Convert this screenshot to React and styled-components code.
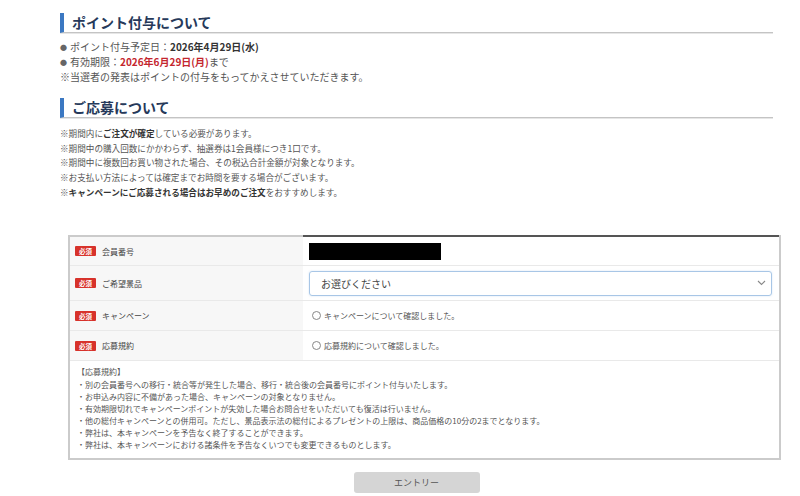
import styled, { createGlobalStyle } from 'styled-components';

const GlobalStyle = createGlobalStyle`
  *, *::before, *::after {
    box-sizing: border-box;
  }
  html, body {
    margin: 0;
    padding: 0;
    background: #fff;
  }
  body {
    font-family: "Noto Sans CJK JP", "Noto Sans", sans-serif;
    color: #555;
  }
`;

const Page = styled.div`
  width: 773px;
  padding: 13px 0 0 60px;
`;

const Heading = styled.h2`
  margin: 0;
  height: 20px;
  padding-left: 8px;
  border-left: 4px solid #3b78c2;
  border-bottom: 1px solid #c4c4c4;
  box-shadow: 0 1px 0 #e6e6e6;
  font-size: 14px;
  line-height: 18px;
  font-weight: 700;
  color: #26395a;
  margin-top: ${({ $top }) => $top || 0}px;
`;

const InfoList = styled.div`
  margin-top: 6px;
  font-size: 10px;
`;

const NoteList = styled.div`
  margin-top: 8px;
  font-size: 8.6px;
`;

const Line = styled.div`
  white-space: nowrap;
  height: ${({ $h }) => $h || 12}px;
  line-height: ${({ $h }) => $h || 12}px;
`;

const Dot = styled.span`
  display: inline-block;
  font-size: 7px;
  line-height: 1;
  vertical-align: middle;
  margin: -2px 3px 0 0;
  color: #666;
`;

const Strong = styled.b`
  color: ${({ $red }) => ($red ? '#c4262e' : '#333')};
  font-weight: 700;
`;

const FormTable = styled.div`
  margin: 36px -8px 0 8px;
  border: 2px solid #cbcbcb;
  border-top: none;
`;

const Row = styled.div`
  display: grid;
  grid-template-columns: 233px 1fr;
  height: ${({ $h }) => $h}px;
  border-top: ${({ $first }) => ($first ? '2px solid #cbcbcb' : '1px solid #e9e9e9')};
`;

const LabelCell = styled.div`
  display: flex;
  align-items: center;
  gap: 6px;
  padding-left: 5px;
  background: #f7f7f7;
  font-size: 8px;
  color: #444;
`;

const ValueCell = styled.div`
  display: flex;
  align-items: center;
  padding: 0 7px 0 6px;
  background: #fff;
  margin-top: ${({ $dark }) => ($dark ? '-2px' : '0')};
  border-top: ${({ $dark }) => ($dark ? '2px solid #555' : 'none')};
`;

const Badge = styled.span`
  display: inline-flex;
  align-items: center;
  justify-content: center;
  width: 21px;
  height: 10px;
  border-radius: 1px;
  background: #d7322b;
  color: #fff;
  font-size: 6.5px;
  font-weight: 700;
`;

const Masked = styled.div`
  width: 132px;
  height: 17px;
  background: #000;
`;

const Select = styled.div`
  flex: 1;
  height: 25px;
  display: flex;
  align-items: center;
  justify-content: space-between;
  padding: 0 5px 0 11px;
  border: 1px solid #a8c6e6;
  border-radius: 3px;
  box-shadow: 0 0 2px rgba(120, 170, 220, 0.35);
  font-size: 10px;
  color: #444;
`;

const Radio = styled.label`
  display: flex;
  align-items: center;
  gap: 3px;
  font-size: 8px;
  color: #555;
`;

const Circle = styled.span`
  width: 9px;
  height: 9px;
  border: 1px solid #888;
  border-radius: 50%;
  margin-left: 3px;
`;

const Terms = styled.div`
  border-top: 1px solid #e9e9e9;
  padding: 5px 7px 7px;
  font-size: 8px;
  color: #555;
`;

const ButtonBar = styled.div`
  display: flex;
  justify-content: center;
  margin-top: 12px;
`;

const EntryButton = styled.button`
  width: 126px;
  height: 21px;
  border: none;
  border-radius: 3px;
  background: #d5d5d5;
  color: #555;
  font-family: inherit;
  font-size: 9px;
  line-height: 21px;
  padding: 0;
`;

const rows = [
  { label: '会員番号', h: 30, content: <Masked /> },
  {
    label: 'ご希望景品',
    h: 35,
    content: (
      <Select>
        お選びください
        <svg width="9" height="6" viewBox="0 0 9 6">
          <path d="M1 1l3.5 3.5L8 1" fill="none" stroke="#888" strokeWidth="1.1" />
        </svg>
      </Select>
    ),
  },
  {
    label: 'キャンペーン',
    h: 30,
    content: (
      <Radio>
        <Circle />
        キャンペーンについて確認しました。
      </Radio>
    ),
  },
  {
    label: '応募規約',
    h: 30,
    content: (
      <Radio>
        <Circle />
        応募規約について確認しました。
      </Radio>
    ),
  },
];

const terms = [
  '【応募規約】',
  '・別の会員番号への移行・統合等が発生した場合、移行・統合後の会員番号にポイント付与いたします。',
  '・お申込み内容に不備があった場合、キャンペーンの対象となりません。',
  '・有効期限切れでキャンペーンポイントが失効した場合お問合せをいただいても復活は行いません。',
  '・他の総付キャンペーンとの併用可。ただし、景品表示法の総付によるプレゼントの上限は、商品価格の10分の2までとなります。',
  '・弊社は、本キャンペーンを予告なく終了することができます。',
  '・弊社は、本キャンペーンにおける諸条件を予告なくいつでも変更できるものとします。',
];

const App = () => {
  return (
    <>
      <GlobalStyle />
      <Page>
        <Heading>ポイント付与について</Heading>
        <InfoList>
          <Line $h={15}>
            <Dot>●</Dot>ポイント付与予定日：<Strong>2026年4月29日(水)</Strong>
          </Line>
          <Line $h={15}>
            <Dot>●</Dot>有効期限：<Strong $red>2026年6月29日(月)</Strong>まで
          </Line>
          <Line $h={15}>※当選者の発表はポイントの付与をもってかえさせていただきます。</Line>
        </InfoList>

        <Heading $top={14}>ご応募について</Heading>
        <NoteList>
          <Line $h={14.7}>
            ※期間内に<Strong>ご注文が確定</Strong>している必要があります。
          </Line>
          <Line $h={14.7}>※期間中の購入回数にかかわらず、抽選券は1会員様につき1口です。</Line>
          <Line $h={14.7}>※期間中に複数回お買い物された場合、その税込合計金額が対象となります。</Line>
          <Line $h={14.7}>※お支払い方法によっては確定までお時間を要する場合がございます。</Line>
          <Line $h={14.7}>
            ※<Strong>キャンペーンにご応募される場合はお早めのご注文</Strong>をおすすめします。
          </Line>
        </NoteList>

        <FormTable>
          {rows.map((r, i) => (
            <Row key={r.label} $h={r.h} $first={i === 0}>
              <LabelCell>
                <Badge>必須</Badge>
                {r.label}
              </LabelCell>
              <ValueCell $dark={i === 0}>{r.content}</ValueCell>
            </Row>
          ))}
          <Terms>
            {terms.map((t) => (
              <Line key={t} $h={12.1}>
                {t}
              </Line>
            ))}
          </Terms>
        </FormTable>

        <ButtonBar>
          <EntryButton>エントリー</EntryButton>
        </ButtonBar>
      </Page>
    </>
  );
};

export default App;
